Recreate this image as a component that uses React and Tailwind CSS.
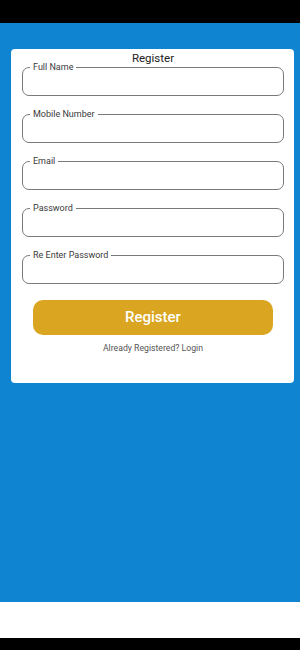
import React from "react";

function Field({ label }) {
  return (
    <div className="relative h-[29px] rounded-[7px] border border-[#7a7a7a]">
      <span className="absolute left-[7px] top-[-7px] bg-white px-[3px] text-[9px] leading-[12px] text-[#3a3a3a]">
        {label}
      </span>
    </div>
  );
}

export default function App() {
  return (
    <div
      className="flex h-[650px] w-[300px] flex-col"
      style={{ fontFamily: "Roboto, 'Noto Sans', sans-serif" }}
    >
      <div className="h-[23px] bg-black" />
      <div className="flex-1 bg-[#0f84d0] pt-[26px]">
        <div className="ml-[11px] mr-[6px] rounded-[4px] bg-white pb-[29px] pl-[11px] pr-[10px] pt-[1px]">
          <div className="text-center text-[11.5px] leading-[16px] text-[#222]">Register</div>
          <div className="mt-[1px] flex flex-col gap-[18px]">
            <Field label="Full Name" />
            <Field label="Mobile Number" />
            <Field label="Email" />
            <Field label="Password" />
            <Field label="Re Enter Password" />
          </div>
          <button className="ml-[11px] mt-[16px] flex h-[35px] w-[240px] items-center justify-center rounded-[10px] bg-[#daa520] text-[15px] font-medium text-white">
            Register
          </button>
          <div className="mt-[7px] text-center text-[8.7px] leading-[12px] text-[#555]">
            Already Registered? Login
          </div>
        </div>
      </div>
      <div className="h-[36px] bg-white" />
      <div className="h-[12px] bg-black" />
    </div>
  );
}
